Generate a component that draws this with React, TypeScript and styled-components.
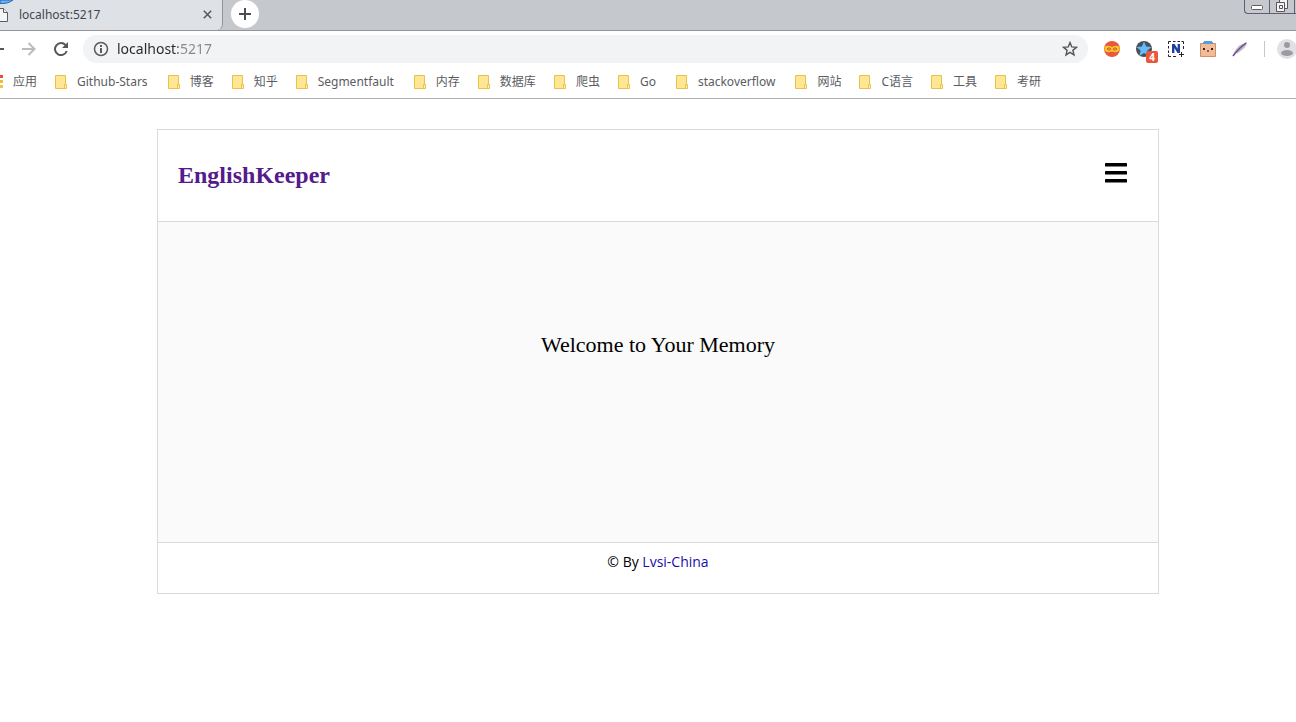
import React from "react";
import styled, { createGlobalStyle } from "styled-components";

const uiFont = `"Noto Sans", "Noto Sans CJK SC", sans-serif`;
const footerFont = `"Open Sans", "Noto Sans CJK SC", sans-serif`;
const pageFont = `"Liberation Serif", "Noto Sans CJK SC", serif`;

const GlobalStyle = createGlobalStyle`
  * { box-sizing: border-box; }
  body { margin: 0; background: #fff; font-family: ${uiFont}; overflow-x: hidden; }
  button { border: 0; padding: 0; background: none; font: inherit; color: inherit; cursor: pointer; }
  svg { display: block; flex: none; }
`;

const Browser = styled.div`
  overflow: hidden;
`;

const TabStrip = styled.div`
  position: relative;
  display: flex;
  align-items: flex-start;
  height: 31px;
  background: #c5c8cc;
  border-bottom: 1px solid #949598;
`;

const Tab = styled.div`
  display: flex;
  align-items: center;
  width: 223px;
  height: 30px;
  padding: 0 7px 1px 0;
  background: #dee1e6;
  border-right: 1px solid #949598;
  border-bottom-right-radius: 6px;
`;

const TabTitle = styled.span`
  flex: 1;
  margin-left: 10px;
  font-size: 12px;
  line-height: 16px;
  color: #45464c;
`;

const IconButton = styled.button<{ $w: number; $h: number }>`
  display: flex;
  flex: none;
  align-items: center;
  justify-content: center;
  width: ${(p) => p.$w}px;
  height: ${(p) => p.$h}px;
`;

const NewTab = styled(IconButton)`
  margin-left: 8px;
  border-radius: 50%;
  background: #fff;
`;

const Orb = styled.svg`
  position: absolute;
  left: 0;
  top: 0;
`;

const WindowControls = styled.div`
  display: flex;
  height: 14px;
  margin-left: auto;
  border: 1px solid #625d70;
  border-width: 0 0 1px 1px;
  border-bottom-left-radius: 4px;
`;

const WindowButton = styled(IconButton)`
  border-right: 1px solid #625d70;
`;

const Toolbar = styled.div`
  display: flex;
  align-items: center;
  height: 36px;
  margin: 0 -1px 0 -19px;
`;

const AddressBar = styled.label`
  display: flex;
  flex: 1;
  align-items: center;
  height: 28px;
  margin: 0 8px 0 6px;
  padding: 0 2px 0 10px;
  border-radius: 14px;
  background: #f1f3f4;
`;

const AddressInput = styled.input`
  flex: 1;
  min-width: 0;
  margin-left: 8px;
  padding: 0;
  border: 0;
  outline: 0;
  font: 14px/20px ${uiFont};
  color: transparent;
  background: linear-gradient(to right, #26272b 61px, #85888c 61px);
  -webkit-background-clip: text;
  background-clip: text;
`;

const Divider = styled.span`
  width: 1px;
  height: 16px;
  margin: 0 12px 0 8px;
  background: #c6c7ca;
`;

const Bookmarks = styled.nav`
  display: flex;
  align-items: center;
  gap: 18px;
  height: 32px;
  margin-left: -9px;
  padding-bottom: 2px;
  border-bottom: 1px solid #b0b0b0;
`;

const Bookmark = styled.a<{ $latin?: boolean }>`
  display: flex;
  align-items: center;
  gap: 10px;
  padding-right: ${(p) => (p.$latin ? 2 : 0)}px;
  font-size: 12px;
  line-height: 16px;
  color: #5a5c61;
  text-decoration: none;
  white-space: nowrap;
`;

const Page = styled.div`
  padding: 30px 0 30px 20px;
`;

const Card = styled.div`
  max-width: 1002px;
  margin: 0 auto;
  border: 1px solid #dadada;
`;

const CardHeader = styled.header`
  display: flex;
  align-items: center;
  justify-content: space-between;
  height: 92px;
  padding: 0 20px 2px;
  border-bottom: 1px solid #dadada;
`;

const Brand = styled.h2`
  margin: 0;
  font: bold 24px/28px ${pageFont};

  a {
    color: #551a8b;
    text-decoration: none;
  }
`;

const Welcome = styled.main`
  padding: 109px 20px 183px;
  border-bottom: 1px solid #dadada;
  background: #fafafa;
  font: 22px/28px ${pageFont};
  color: #000;
  text-align: center;
`;

const CardFooter = styled.footer`
  padding: 9px 20px 21px;
  font: 14px/20px ${footerFont};
  color: #000;
  text-align: center;

  a {
    color: #1a0dab;
    text-decoration: none;
  }
`;

const Folder = () => (
  <svg width="12" height="14" viewBox="0 0 12 14" aria-hidden="true">
    <path d="M.5.5h10v13H.5z" fill="#ffe694" stroke="#e8c34a" />
    <path d="M9.5 9.5h2v4h-2z" fill="#fff0b5" stroke="#e8c34a" />
  </svg>
);

const Apps = () => (
  <svg width="12" height="14" viewBox="0 0 12 14" aria-hidden="true">
    <path d="M0 0h3v3H0zM4 0h3v3H4zM9 0h3v3H9z" fill="#ea4d35" />
    <path d="M0 5h3v3H0zM4 5h3v3H4zM9 5h3v3H9z" fill="#f0b93a" />
    <path d="M0 10h3v3H0zM4 10h3v3H4zM9 10h3v3H9z" fill="#f0c63a" />
  </svg>
);

const starPath = "M8 0l2.2 5.4 5.8.5-4.4 3.8L13 15.4 8 12.3 3 15.4l1.4-5.7L0 5.9l5.8-.5z";

const MaskIcon = () => (
  <svg width="18" height="18" viewBox="0 0 18 18">
    <circle cx="9" cy="9" r="8" fill="#e9573f" />
    <path d="M1.5 6.5Q5 5 9 7q4-2 7.500-.5v4Q14 13.500 9 11.500 4 13.500 1.500 10.500z" fill="#f4c52c" />
    <path d="M4 9q2-2.500 4 0-2 2.500-4 0zM10 9q2-2.500 4 0-2 2.500-4 0z" fill="#f4c52c" stroke="#d9572d" />
  </svg>
);

const StarExtension = () => (
  <svg width="28" height="28" viewBox="0 0 28 28">
    <circle cx="14" cy="14" r="8" fill="#4b4f56" />
    <path d={starPath} transform="translate(6.500 6.500) scale(.94)" fill="#63bdfa" />
  </svg>
);

const BadgeHost = styled(IconButton)`
  position: relative;
`;

const Badge = styled.span`
  position: absolute;
  left: 18px;
  top: 16px;
  width: 12px;
  height: 12px;
  border-radius: 2px;
  background: #ea553b;
  color: #fff;
  font-size: 10px;
  font-weight: 700;
  line-height: 12px;
  text-align: center;
`;

const SelectionIcon = () => (
  <svg width="18" height="18" viewBox="0 0 18 18" fill="none">
    <path d="M1.500 4V1.500H4M6 1.500h2.500M10.500 1.500H13M14.500 1.500h2V4M1.500 6v2.500M1.500 10.500V13M1.500 14.500v2H4M6 16.500h3M16.500 6v3M12 14.500h5M14.500 12v5" stroke="#24202c" />
    <path d="M5 13V4h2.600l3 4.800V4H13v9h-2.500L7.400 8.100V13z" fill="#213f9e" />
  </svg>
);

const BoxFaceIcon = () => (
  <svg width="18" height="18" viewBox="0 0 18 18">
    <path d="M1.500 3.500h15v13h-15z" fill="#efbd98" stroke="#d98d65" />
    <path d="M4 2h10v2H4zM5 1h8v1H5z" fill="#5a9be6" />
    <path d="M4 8h2v2H4zM12 8h2v2h-2z" fill="#30212a" />
    <path d="M8 10h2v2H8z" fill="#b5444a" />
  </svg>
);

const FeatherIcon = () => (
  <svg width="18" height="18" viewBox="0 0 18 18">
    <path d="M3 14Q4 9 9 5l7-3q0 4-5 8-3 3-8 4z" fill="#bdbac4" />
    <path d="M2 16Q6 10 15 3" stroke="#6b4a92" strokeWidth="1.500" fill="none" />
  </svg>
);

const folders = [
  "Github-Stars", "博客", "知乎", "Segmentfault", "内存", "数据库", "爬虫",
  "Go", "stackoverflow", "网站", "C语言", "工具", "考研",
];

export default function App() {
  return (
    <>
      <GlobalStyle />
      <Browser>
        <TabStrip>
          <Tab>
            <svg width="9" height="14" viewBox="0 0 9 14" fill="#f5f6f7" stroke="#5a5c61" aria-hidden="true">
              <path d="M-3 .5h6.500l4 4v9H-3z" />
              <path d="M3.500.5v4h4" />
            </svg>
            <TabTitle>localhost:5217</TabTitle>
            <IconButton $w={16} $h={16} aria-label="Close tab">
              <svg width="9" height="9" viewBox="0 0 9 9" stroke="#55575c" strokeWidth="1.500">
                <path d="M.8.8l7.400 7.400M8.200.8L.8 8.200" />
              </svg>
            </IconButton>
          </Tab>
          <NewTab $w={28} $h={28} aria-label="New tab">
            <svg width="12" height="12" viewBox="0 0 12 12" stroke="#4b4d52" strokeWidth="2">
              <path d="M6 0v12M0 6h12" />
            </svg>
          </NewTab>
          <Orb width="14" height="5" viewBox="0 0 14 5" aria-hidden="true">
            <path d="M0 0h13Q8 4 0 3.500z" fill="#63b5f2" stroke="#2d67b2" />
          </Orb>
          <WindowControls>
            <WindowButton $w={25} $h={13} aria-label="Minimize">
              <svg width="13" height="13" viewBox="0 0 13 13">
                <rect x=".5" y="5.500" width="11" height="4" rx="1" fill="#fff" stroke="#625d60" />
              </svg>
            </WindowButton>
            <WindowButton $w={25} $h={13} aria-label="Restore">
              <svg width="13" height="13" viewBox="0 0 13 13" fill="#f4f4f4" stroke="#5a555c">
                <path d="M3.500-.5h8v9h-8z" />
                <path d="M.5 2.500h8v9h-8z" />
                <path d="M3.500 5.500h3v3h-3z" />
              </svg>
            </WindowButton>
            <IconButton $w={1} $h={13} aria-label="Close" />
          </WindowControls>
        </TabStrip>

        <Toolbar>
          <IconButton $w={32} $h={28} aria-label="Back">
            <svg width="14" height="14" viewBox="0 0 14 14" fill="none" stroke="#55575c" strokeWidth="2">
              <path d="M14 7H1.500M7.500 1L1.500 7l6 6" />
            </svg>
          </IconButton>
          <IconButton $w={32} $h={28} aria-label="Forward">
            <svg width="14" height="14" viewBox="0 0 14 14" fill="none" stroke="#b9bbbe" strokeWidth="2">
              <path d="M0 7h12.500M6.500 1l6 6-6 6" />
            </svg>
          </IconButton>
          <IconButton $w={32} $h={28} aria-label="Reload">
            <svg width="14" height="14" viewBox="0 0 14 14">
              <path d="M11.600 3.200A6 6 0 1 0 12.700 9" fill="none" stroke="#55575c" strokeWidth="2" />
              <path d="M14 0v6H8z" fill="#55575c" />
            </svg>
          </IconButton>
          <AddressBar>
            <svg width="16" height="16" viewBox="0 0 16 16" aria-hidden="true">
              <circle cx="8" cy="8" r="6.500" fill="none" stroke="#5a5c61" strokeWidth="1.500" />
              <path d="M7 4h2v2H7zM7 7h2v5H7z" fill="#5a5c61" />
            </svg>
            <AddressInput type="text" aria-label="Address" defaultValue="localhost:5217" spellCheck={false} />
            <IconButton $w={32} $h={28} aria-label="Bookmark this page">
              <svg width="16" height="16" viewBox="-2 -2 20 20" fill="none" stroke="#55575c" strokeWidth="1.800">
                <path d={starPath} />
              </svg>
            </IconButton>
          </AddressBar>
          <IconButton $w={32} $h={28} aria-label="Mask extension"><MaskIcon /></IconButton>
          <BadgeHost $w={32} $h={28} aria-label="Star extension">
            <StarExtension />
            <Badge>4</Badge>
          </BadgeHost>
          <IconButton $w={32} $h={28} aria-label="Capture extension"><SelectionIcon /></IconButton>
          <IconButton $w={32} $h={28} aria-label="Box extension"><BoxFaceIcon /></IconButton>
          <IconButton $w={32} $h={28} aria-label="Feather extension"><FeatherIcon /></IconButton>
          <Divider />
          <IconButton $w={20} $h={20} aria-label="Profile">
            <svg width="20" height="20" viewBox="0 0 20 20">
              <circle cx="10" cy="10" r="10" fill="#dfe1e4" />
              <circle cx="10" cy="6" r="3" fill="#9c9ba2" />
              <ellipse cx="10" cy="14" rx="6" ry="3" fill="#9c9ba2" />
            </svg>
          </IconButton>
        </Toolbar>

        <Bookmarks>
          <Bookmark href="#apps"><Apps />应用</Bookmark>
          {folders.map((name) => (
            <Bookmark key={name} href={`#${name}`} $latin={/^[\w-]+$/.test(name)}>
              <Folder />
              {name}
            </Bookmark>
          ))}
        </Bookmarks>

        <Page>
          <Card>
            <CardHeader>
              <Brand><a href="#home">EnglishKeeper</a></Brand>
              <IconButton $w={44} $h={44} aria-label="Menu">
                <svg width="22" height="24" viewBox="0 0 22 24" fill="#000">
                  <rect width="22" height="3.500" rx=".5" />
                  <rect y="8" width="22" height="3.500" rx=".5" />
                  <rect y="16" width="22" height="3.500" rx=".5" />
                </svg>
              </IconButton>
            </CardHeader>
            <Welcome>Welcome to Your Memory</Welcome>
            <CardFooter>© By <a href="#author">Lvsi-China</a></CardFooter>
          </Card>
        </Page>
      </Browser>
    </>
  );
}
